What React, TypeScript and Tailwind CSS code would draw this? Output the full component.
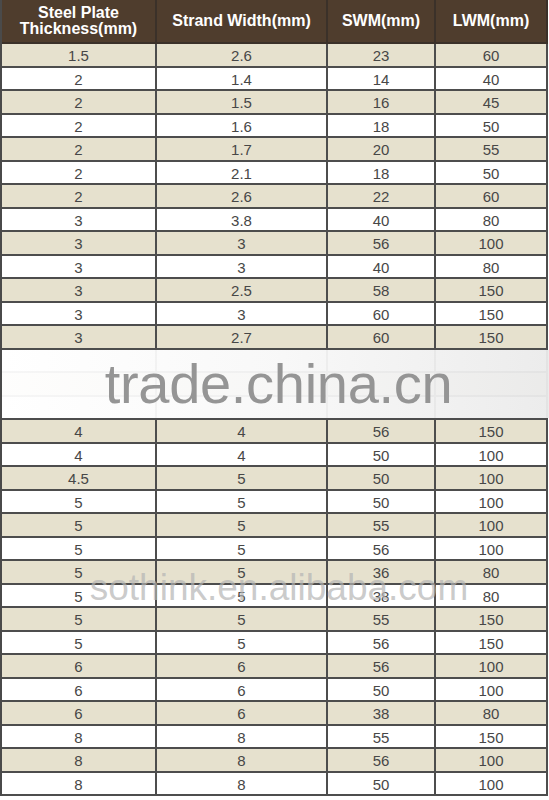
const font = { fontFamily: '"Liberation Sans", Arial, sans-serif' };

// rows 14-16 sit under the watermark band, so they carry no text
const rows: string[][] = [
  ["1.5", "2.6", "23", "60"],
  ["2", "1.4", "14", "40"],
  ["2", "1.5", "16", "45"],
  ["2", "1.6", "18", "50"],
  ["2", "1.7", "20", "55"],
  ["2", "2.1", "18", "50"],
  ["2", "2.6", "22", "60"],
  ["3", "3.8", "40", "80"],
  ["3", "3", "56", "100"],
  ["3", "3", "40", "80"],
  ["3", "2.5", "58", "150"],
  ["3", "3", "60", "150"],
  ["3", "2.7", "60", "150"],
  ["", "", "", ""],
  ["", "", "", ""],
  ["", "", "", ""],
  ["4", "4", "56", "150"],
  ["4", "4", "50", "100"],
  ["4.5", "5", "50", "100"],
  ["5", "5", "50", "100"],
  ["5", "5", "55", "100"],
  ["5", "5", "56", "100"],
  ["5", "5", "36", "80"],
  ["5", "5", "38", "80"],
  ["5", "5", "55", "150"],
  ["5", "5", "56", "150"],
  ["6", "6", "56", "100"],
  ["6", "6", "50", "100"],
  ["6", "6", "38", "80"],
  ["8", "8", "55", "150"],
  ["8", "8", "56", "100"],
  ["8", "8", "50", "100"],
];

const headers = ["Steel Plate Thickness(mm)", "Strand Width(mm)", "SWM(mm)", "LWM(mm)"];

export default function App() {
  return (
    <div className="w-[549px] h-[800px] bg-white" style={font}>
      <div className="relative w-[548px] border-l-2 border-[#4a4a4a]">
        {/* header */}
        <div className="grid grid-cols-[155px_171px_108px_112px] h-[44px] bg-[#4f3d2d] border-b-2 border-[#3b3129]">
          {headers.map((h, i) => (
            <div
              key={h}
              className="flex items-center justify-center border-r-2 border-[#3b3129] px-2 text-center text-[16px] leading-[16px] font-bold text-white"
            >
              {i === 0 ? (
                <span>
                  Steel Plate
                  <br />
                  Thickness(mm)
                </span>
              ) : (
                h
              )}
            </div>
          ))}
        </div>

        {/* body */}
        {rows.map((r, idx) => (
          <div
            key={idx}
            className={
              "grid grid-cols-[155px_171px_108px_112px] h-[23.5px] border-b-2 border-[#4d4d4d] " +
              (idx % 2 === 0 ? "bg-[#e6e1ce]" : "bg-white")
            }
          >
            {r.map((v, j) => (
              <div
                key={j}
                className="flex items-center justify-center border-r-2 border-[#4d4d4d] pt-[2px] text-[15px] leading-[15px] text-[#474747]"
              >
                {v}
              </div>
            ))}
          </div>
        ))}

        {/* trade.china.cn band */}
        <div className="absolute left-0 right-[-2px] top-[349.5px] h-[68px] bg-gradient-to-r from-white/95 via-[#f8f8f8]/95 to-[#ebebeb]/95">
          <div className="pt-[6px] pl-[5px] text-center text-[56px] leading-[56px] tracking-[-0.3px] text-[#959595]">
            trade.china.cn
          </div>
        </div>

        {/* faint watermark */}
        <div className="absolute left-0 right-0 top-[569px] pl-[8px] text-center text-[37px] leading-[37px] text-[#b4b4b4]/70">
          sothink.en.alibaba.com
        </div>
      </div>
    </div>
  );
}
